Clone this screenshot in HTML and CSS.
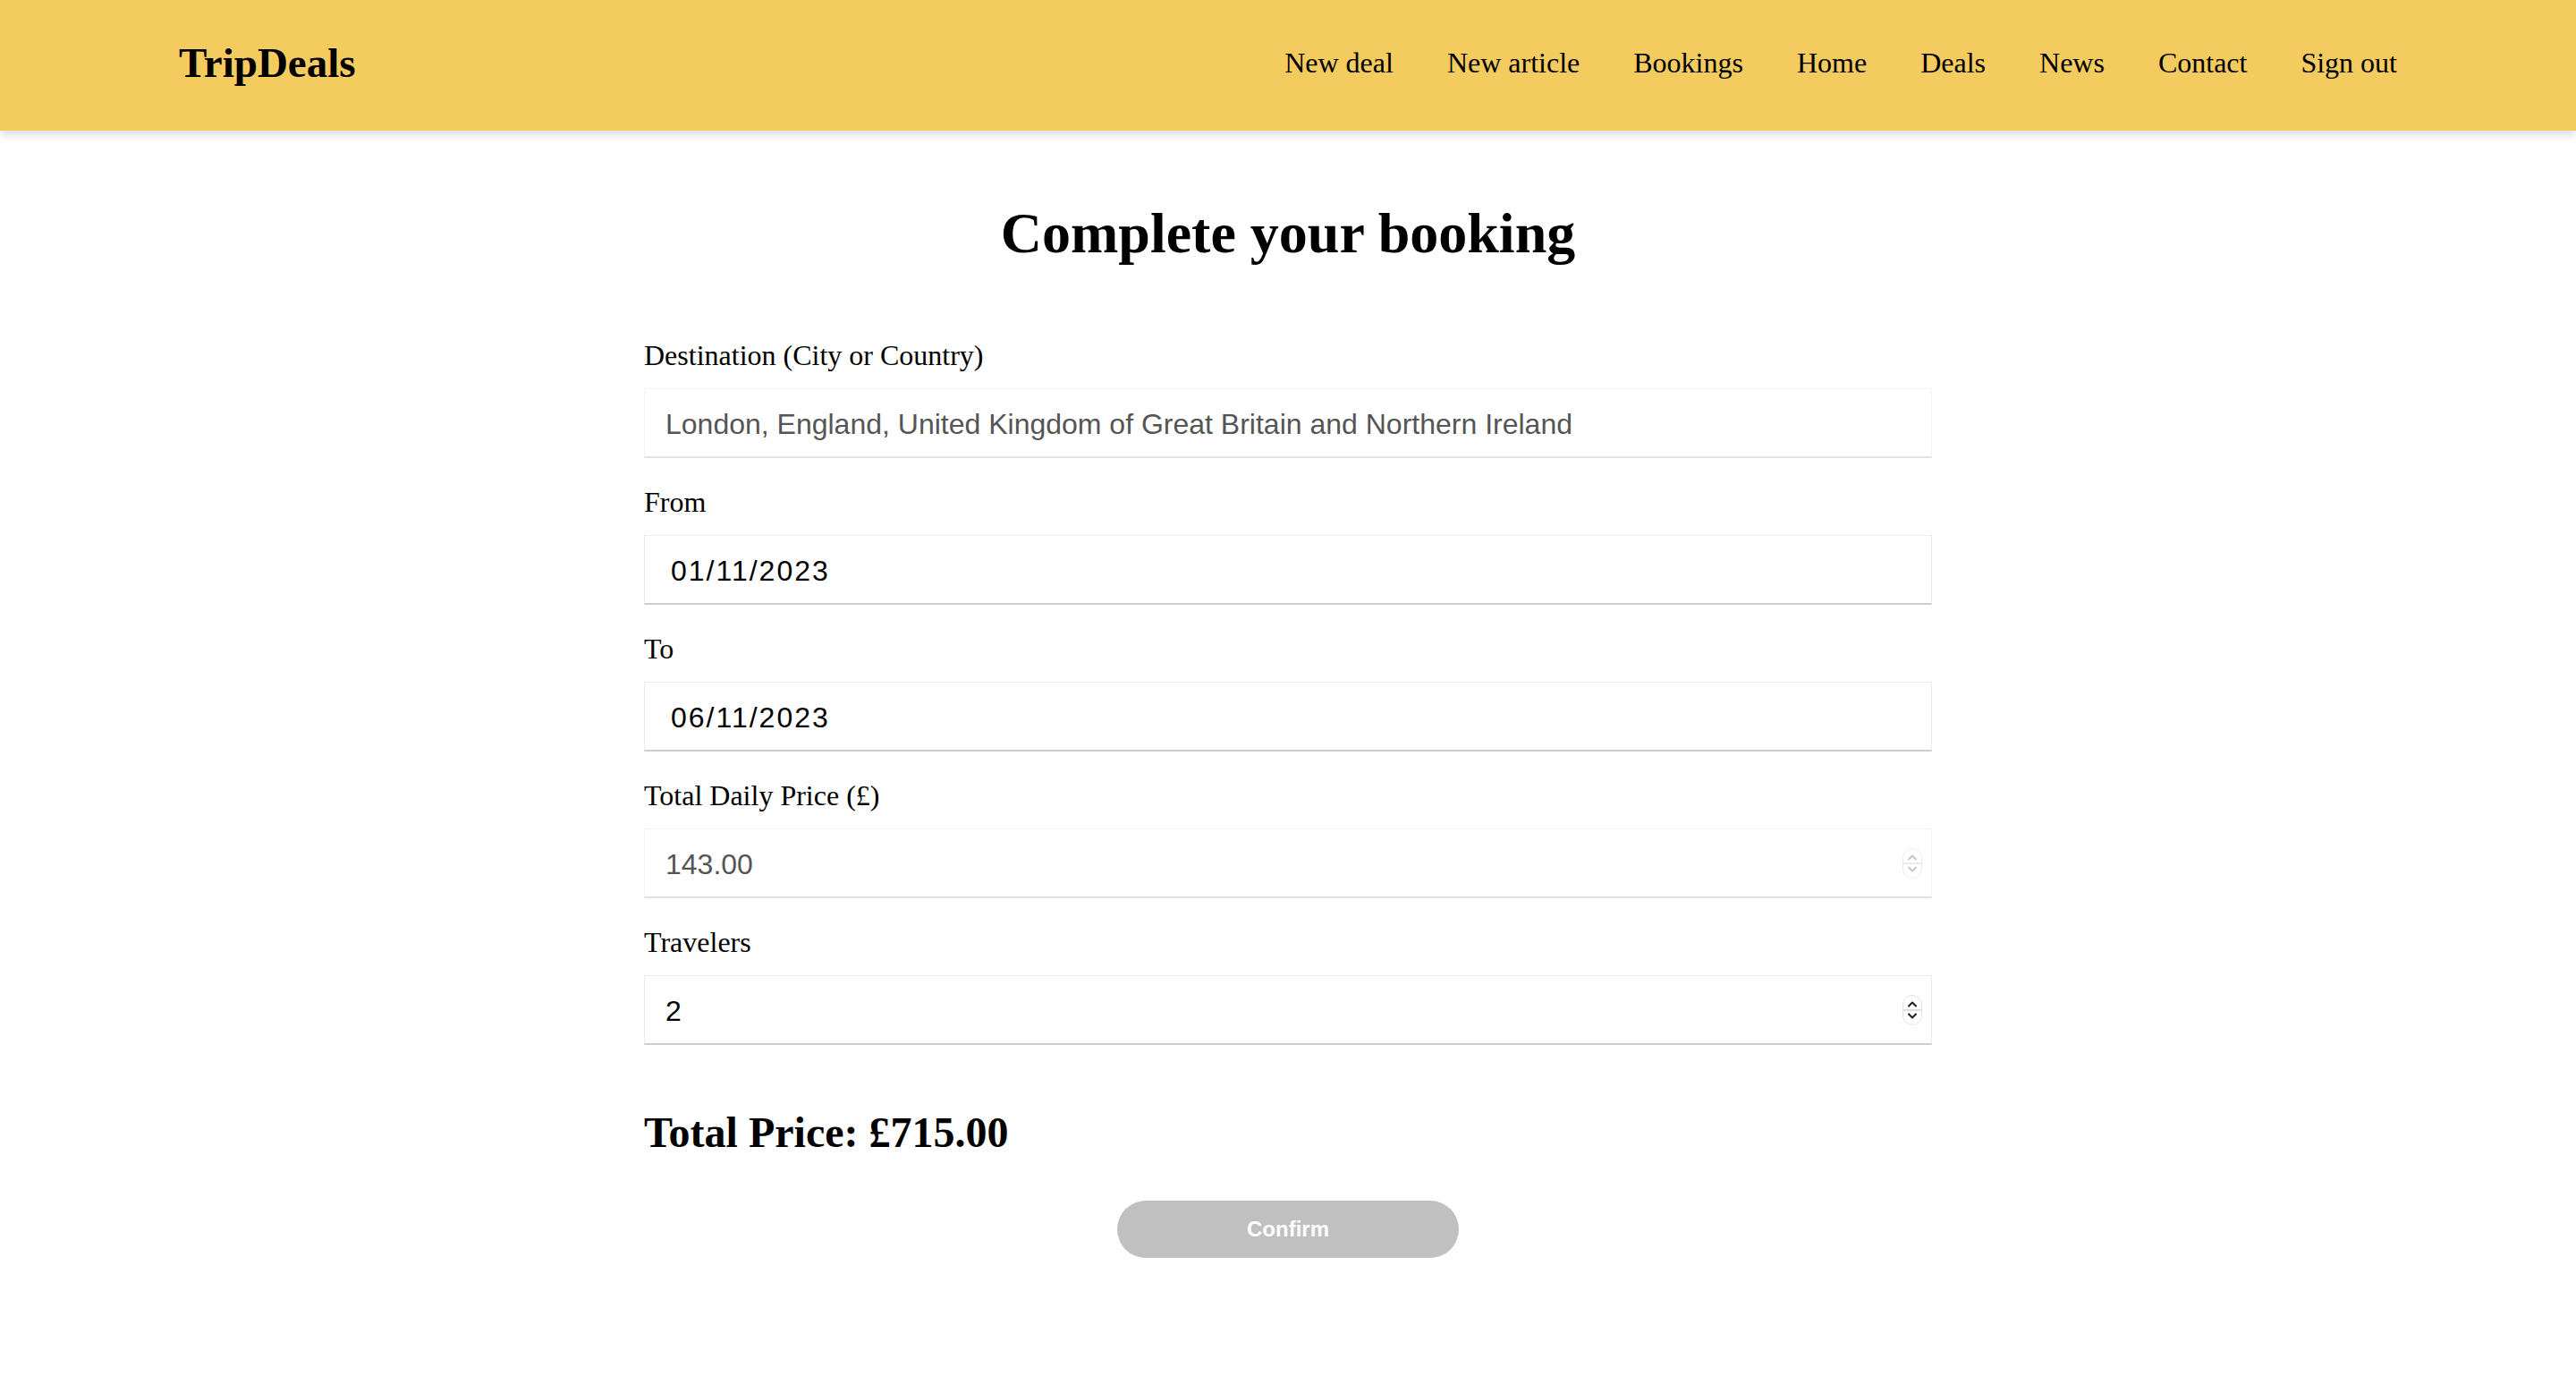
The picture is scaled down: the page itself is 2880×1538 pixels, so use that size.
FILE: index.html
```html
<!DOCTYPE html>
<html lang="en">
<head>
<meta charset="utf-8">
<title>TripDeals - Complete your booking</title>
<link rel="stylesheet" href="styles.css">
</head>
<body>
<header class="site-header">
  <a class="logo" href="#">TripDeals</a>
  <nav class="nav">
    <a href="#">New deal</a>
    <a href="#">New article</a>
    <a href="#">Bookings</a>
    <a href="#">Home</a>
    <a href="#">Deals</a>
    <a href="#">News</a>
    <a href="#">Contact</a>
    <a href="#">Sign out</a>
  </nav>
</header>
<main class="booking">
  <h1 class="title">Complete your booking</h1>
  <form class="form">
    <div class="field">
      <label class="label" for="dest">Destination (City or Country)</label>
      <div class="control">
        <input class="input input-disabled" id="dest" type="text" value="London, England, United Kingdom of Great Britain and Northern Ireland" disabled>
      </div>
    </div>
    <div class="field">
      <label class="label" for="from">From</label>
      <div class="control">
        <input class="input input-date" id="from" type="text" value="01/11/2023">
      </div>
    </div>
    <div class="field">
      <label class="label" for="to">To</label>
      <div class="control">
        <input class="input input-date" id="to" type="text" value="06/11/2023">
      </div>
    </div>
    <div class="field">
      <label class="label" for="price">Total Daily Price (£)</label>
      <div class="control">
        <input class="input input-disabled" id="price" type="number" value="143.00" disabled>
        <span class="stepper stepper-disabled">
          <svg width="22" height="34" viewBox="0 0 22 34"><rect x="0.5" y="0.5" width="21" height="33" rx="10.5" fill="#fff" stroke="#ececec"/><line x1="1" y1="17" x2="21" y2="17" stroke="#e6e6e6" stroke-width="1.5"/><path d="M7 12.5 L11 8.5 L15 12.5" fill="none" stroke="#c4c4c4" stroke-width="1.8" stroke-linecap="round" stroke-linejoin="round"/><path d="M7 21.5 L11 25.5 L15 21.5" fill="none" stroke="#c4c4c4" stroke-width="1.8" stroke-linecap="round" stroke-linejoin="round"/></svg>
        </span>
      </div>
    </div>
    <div class="field">
      <label class="label" for="travelers">Travelers</label>
      <div class="control">
        <input class="input" id="travelers" type="number" value="2">
        <span class="stepper">
          <svg width="22" height="34" viewBox="0 0 22 34"><rect x="0.5" y="0.5" width="21" height="33" rx="10.5" fill="#fff" stroke="#e2e2e2"/><line x1="1" y1="17" x2="21" y2="17" stroke="#d4d4d4" stroke-width="1.5"/><path d="M7 12.5 L11 8.5 L15 12.5" fill="none" stroke="#1e1e1e" stroke-width="2" stroke-linecap="round" stroke-linejoin="round"/><path d="M7 21.5 L11 25.5 L15 21.5" fill="none" stroke="#1e1e1e" stroke-width="2" stroke-linecap="round" stroke-linejoin="round"/></svg>
        </span>
      </div>
    </div>
    <h2 class="total">Total Price: £715.00</h2>
    <div class="actions">
      <button class="confirm" type="button" disabled>Confirm</button>
    </div>
  </form>
</main>
</body>
</html>
```
FILE: styles.css
```css
* {
  box-sizing: border-box;
}

html, body {
  margin: 0;
  padding: 0;
  background: #ffffff;
}

body {
  font-family: "Liberation Serif", "Times New Roman", serif;
  color: #000;
}

.site-header {
  height: 146px;
  padding: 0 200px 7px;
  background: #f4cb5e;
  display: flex;
  align-items: center;
  justify-content: space-between;
  box-shadow: 0 4px 10px rgba(0, 0, 0, 0.16);
  position: relative;
  z-index: 1;
}

.logo {
  font-family: "Liberation Serif", "Times New Roman", serif;
  font-weight: bold;
  font-size: 47px;
  line-height: 52px;
  color: #000;
  text-decoration: none;
}

.nav {
  display: flex;
  gap: 60px;
}

.nav a {
  font-size: 32px;
  line-height: 36px;
  color: #000;
  text-decoration: none;
}

.booking {
  width: 1440px;
  margin: 0 auto;
}

.title {
  margin: 79px 0 0;
  font-size: 64px;
  line-height: 72px;
  font-weight: bold;
  text-align: center;
}

.form {
  margin-top: 82px;
  display: flex;
  flex-direction: column;
}

.field {
  display: flex;
  flex-direction: column;
  margin-bottom: 31px;
}

.label {
  font-size: 32px;
  line-height: 36px;
  margin-bottom: 19px;
}

.control {
  position: relative;
}

.input {
  display: block;
  width: 100%;
  height: 78px;
  margin: 0;
  padding: 4px 0 0 23px;
  border: 1px solid #ececec;
  border-bottom: 2px solid #cdcdcd;
  border-radius: 0;
  background: #fff;
  font-family: "Liberation Sans", Arial, sans-serif;
  font-size: 32px;
  color: #000;
  outline: none;
  -webkit-appearance: none;
  appearance: none;
}

.input-date {
  padding-left: 29px;
  letter-spacing: 2px;
}

.input-disabled {
  color: #555;
  border-color: #f3f3f3;
  border-bottom-color: #e2e2e2;
  -webkit-text-fill-color: #555;
  opacity: 1;
}

.input::-webkit-inner-spin-button,
.input::-webkit-outer-spin-button {
  -webkit-appearance: none;
  margin: 0;
}

.stepper {
  position: absolute;
  right: 11px;
  top: 50%;
  transform: translateY(-50%);
  display: flex;
  width: 22px;
  height: 34px;
}

.total {
  margin: 39px 0 0;
  font-size: 48px;
  line-height: 56px;
  font-weight: bold;
}

.actions {
  display: flex;
  justify-content: center;
  margin-top: 48px;
}

.confirm {
  width: 382px;
  height: 64px;
  border: none;
  border-radius: 32px;
  background: #c0c0c0;
  color: #fff;
  font-family: "Liberation Sans", Arial, sans-serif;
  font-weight: bold;
  font-size: 24px;
  padding: 0;
}
```
